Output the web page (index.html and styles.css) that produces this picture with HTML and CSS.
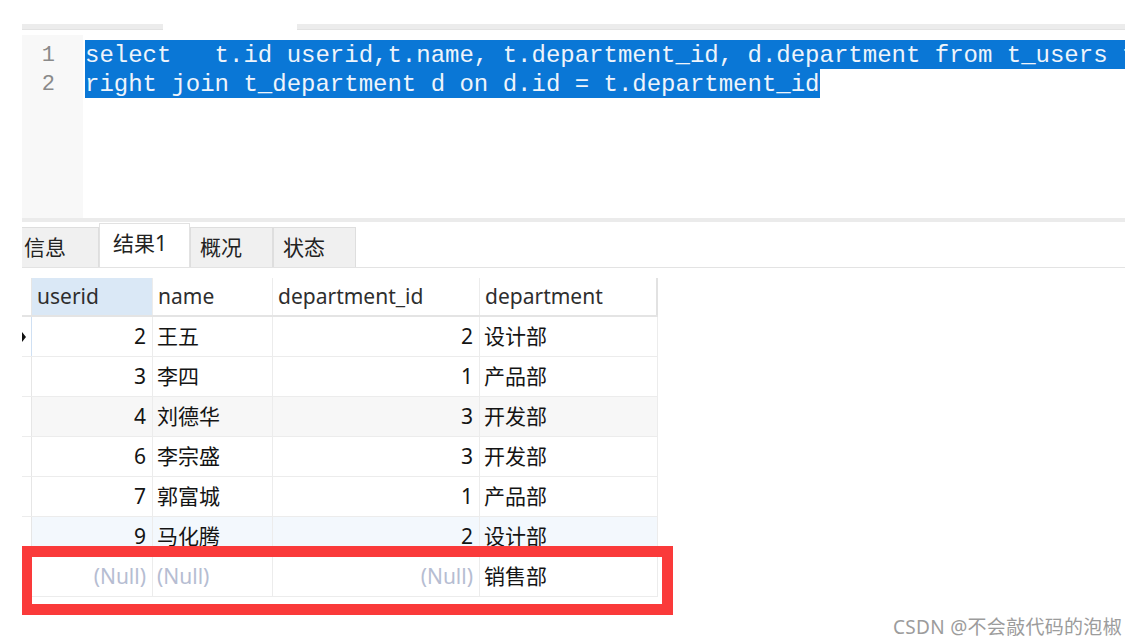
FILE: index.html
```html
<!DOCTYPE html>
<html lang="zh-CN">
<head>
<meta charset="utf-8">
<title>Query result</title>
<link rel="stylesheet" href="styles.css">
</head>
<body>
<div class="page">
  <div class="topbar">
    <div class="seg seg-a"></div>
    <div class="seg-gap"></div>
    <div class="seg seg-b"></div>
  </div>

  <div class="editor">
    <div class="gutter">
      <div class="ln">1</div>
      <div class="ln">2</div>
    </div>
    <div class="code">
      <div class="line"><span class="sel sel-full">select   t.id userid,t.name, t.department_id, d.department from t_users t</span></div>
      <div class="line"><span class="sel">right join t_department d on d.id = t.department_id</span></div>
    </div>
  </div>

  <div class="sep"></div>

  <div class="tabs">
    <div class="tab tab-first">信息</div>
    <div class="tab active">结果1</div>
    <div class="tab tab-w">概况</div>
    <div class="tab tab-w">状态</div>
  </div>

  <div class="grid">
    <div class="row head">
      <div class="c ind"></div>
      <div class="c c1 hsel">userid</div>
      <div class="c c2">name</div>
      <div class="c c3">department_id</div>
      <div class="c c4">department</div>
    </div>
    <div class="row">
      <div class="c ind cur"><span class="arrow"></span></div>
      <div class="c c1 num">2</div>
      <div class="c c2">王五</div>
      <div class="c c3 num">2</div>
      <div class="c c4">设计部</div>
    </div>
    <div class="row">
      <div class="c ind"></div>
      <div class="c c1 num">3</div>
      <div class="c c2">李四</div>
      <div class="c c3 num">1</div>
      <div class="c c4">产品部</div>
    </div>
    <div class="row alt">
      <div class="c ind"></div>
      <div class="c c1 num">4</div>
      <div class="c c2">刘德华</div>
      <div class="c c3 num">3</div>
      <div class="c c4">开发部</div>
    </div>
    <div class="row">
      <div class="c ind"></div>
      <div class="c c1 num">6</div>
      <div class="c c2">李宗盛</div>
      <div class="c c3 num">3</div>
      <div class="c c4">开发部</div>
    </div>
    <div class="row">
      <div class="c ind"></div>
      <div class="c c1 num">7</div>
      <div class="c c2">郭富城</div>
      <div class="c c3 num">1</div>
      <div class="c c4">产品部</div>
    </div>
    <div class="row blue">
      <div class="c ind"></div>
      <div class="c c1 num">9</div>
      <div class="c c2">马化腾</div>
      <div class="c c3 num">2</div>
      <div class="c c4">设计部</div>
    </div>
    <div class="row">
      <div class="c ind"></div>
      <div class="c c1 num null">(Null)</div>
      <div class="c c2 null">(Null)</div>
      <div class="c c3 num null">(Null)</div>
      <div class="c c4">销售部</div>
    </div>
  </div>

  <div class="redbox"></div>
  <div class="watermark">CSDN @不会敲代码的泡椒</div>
</div>
</body>
</html>
```

FILE: styles.css
```css
html, body {
  margin: 0;
  padding: 0;
  background: #ffffff;
}

.page {
  position: relative;
  width: 1140px;
  height: 644px;
  overflow: hidden;
  background: #ffffff;
  font-family: "Noto Sans", "Noto Sans CJK SC", sans-serif;
}

/* top strip */
.topbar {
  display: flex;
  height: 6px;
  margin-top: 24px;
  padding-left: 22px;
}
.seg {
  background: #ececec;
  border-bottom: 1px solid #e2e2e2;
  box-sizing: border-box;
}
.seg-a { width: 141px; }
.seg-gap { width: 134px; }
.seg-b { width: 828px; }

/* editor */
.editor {
  display: flex;
  margin-top: 5px;
  margin-left: 22px;
  width: 1103px;
  height: 183px;
  overflow: hidden;
}
.gutter {
  width: 61px;
  flex: none;
  background: #f8f8f8;
  padding-top: 5px;
  box-sizing: border-box;
}
.ln {
  height: 29px;
  line-height: 31px;
  text-align: right;
  padding-right: 28px;
  font-family: "Liberation Mono", monospace;
  font-size: 22px;
  color: #8a8a8a;
}
.code {
  flex: 1;
  padding-top: 5px;
  padding-left: 2px;
  overflow: hidden;
}
.line {
  height: 29px;
  line-height: 29px;
  white-space: pre;
  font-family: "Liberation Mono", monospace;
  font-size: 24px;
}
.sel {
  display: inline-block;
  height: 29px;
  line-height: 32px;
  background: #0a77d6;
  color: #eef4fb;
}
.sel-full {
  min-width: 1040px;
}

.sep {
  margin-left: 22px;
  width: 1103px;
  height: 4px;
  background: #ebebeb;
}

/* tabs */
.tabs {
  display: flex;
  align-items: flex-end;
  margin-left: 22px;
  width: 1103px;
  height: 46px;
  border-bottom: 1px solid #e3e3e3;
  box-sizing: border-box;
}
.tab {
  height: 40px;
  box-sizing: border-box;
  background: #f0f0f0;
  border: 1px solid #dedede;
  border-bottom: none;
  font-size: 21px;
  color: #222222;
  display: flex;
  align-items: center;
  justify-content: flex-start;
  padding-left: 9px;
  line-height: 1;
}
.tab-first {
  width: 77px;
  padding-left: 2px;
  border-left: none;
}
.tab.active {
  width: 91px;
  height: 44px;
  background: #ffffff;
  border-color: #e2e2e2;
  padding-left: 13px;
  padding-bottom: 4px;
}
.tab-w {
  width: 83px;
}

/* grid */
.grid {
  margin-top: 10px;
  margin-left: 22px;
  width: 636px;
}
.row {
  display: flex;
  height: 40px;
  border-bottom: 1px solid #ececec;
  box-sizing: border-box;
  background: #ffffff;
}
.row.head {
  height: 39px;
  border-bottom: 2px solid #e4e4e4;
}
.row.alt { background: #f7f7f7; }
.row.blue { background: #f3f8fd; }

.c {
  box-sizing: border-box;
  height: 100%;
  display: flex;
  align-items: center;
  border-right: 1px solid #ececec;
  font-size: 21px;
  color: #141414;
  white-space: nowrap;
  padding-left: 4px;
  line-height: 1;
}
.ind {
  width: 10px;
  padding: 0;
  background: #ffffff;
  border-right: 1px solid #e6e6e6;
  position: relative;
}
.ind.cur { border-right-color: #cfe0f3; }
.c1 { width: 121px; }
.c2 { width: 120px; }
.c3 { width: 207px; }
.c4 { width: 178px; }
.head .c {
  color: #2e2e2e;
  padding-left: 5px;
  background: #ffffff;
}
.head .ind { background: #ffffff; }
.head .c.hsel { background: #dae8f6; }
.head .c4 { border-right: 2px solid #e2e2e2; }
.num {
  justify-content: flex-end;
  padding-left: 0;
  padding-right: 6px;
}
.null { color: #b6bdd2; }

.arrow {
  position: absolute;
  left: 0;
  top: 15px;
  width: 0;
  height: 0;
  border-top: 5px solid transparent;
  border-bottom: 5px solid transparent;
  border-left: 4px solid #111111;
}

/* overlays */
.redbox {
  position: absolute;
  left: 22px;
  top: 546px;
  width: 651px;
  height: 69px;
  box-sizing: border-box;
  border: 11px solid #fa3a3a;
  border-left-width: 10px;
}
.watermark {
  position: absolute;
  left: 893px;
  top: 612px;
  font-size: 19px;
  color: #9c9c9c;
  font-family: "Noto Sans", "Noto Sans CJK SC", sans-serif;
  letter-spacing: 0.3px;
}
```
